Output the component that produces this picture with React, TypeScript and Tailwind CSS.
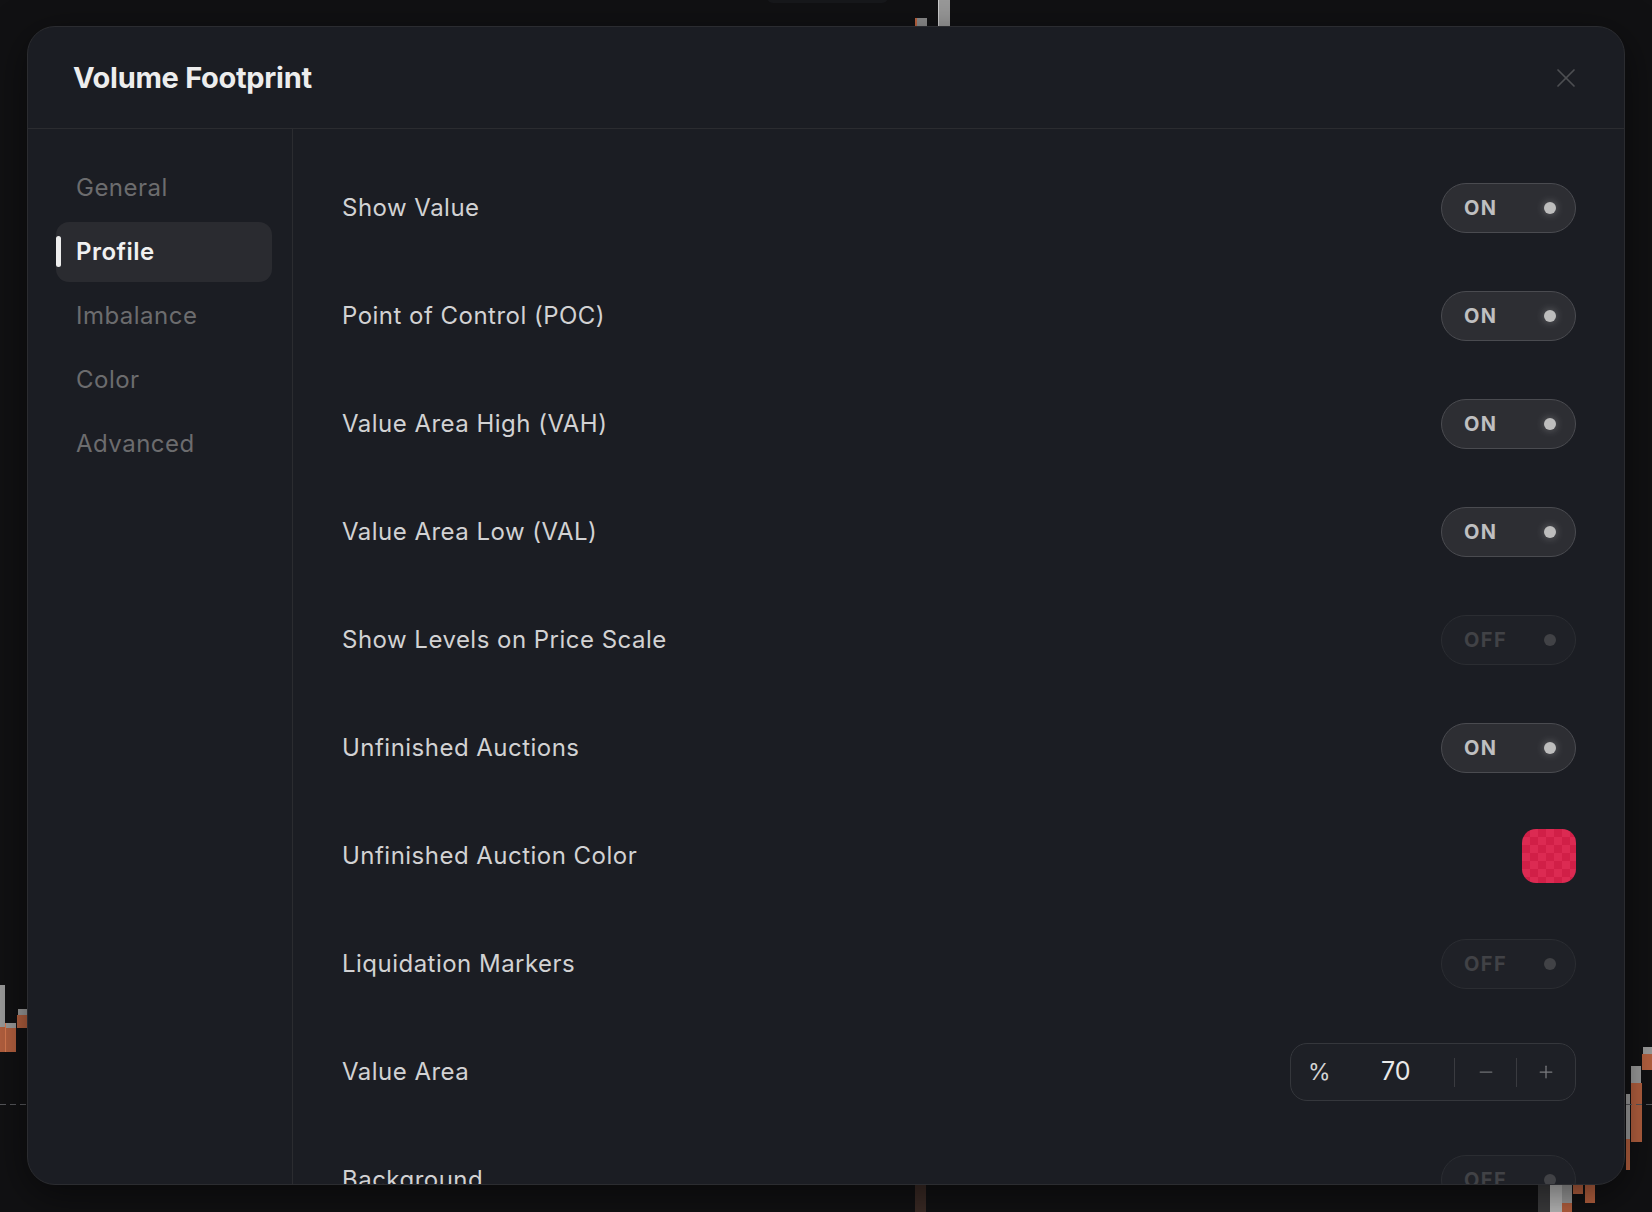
import React from 'react';
import { X, Minus, Plus } from 'lucide-react';

type Row =
  | { label: string; kind: 'toggle'; on: boolean }
  | { label: string; kind: 'color' }
  | { label: string; kind: 'number'; value: number };

const rows: Row[] = [
  { label: 'Show Value', kind: 'toggle', on: true },
  { label: 'Point of Control (POC)', kind: 'toggle', on: true },
  { label: 'Value Area High (VAH)', kind: 'toggle', on: true },
  { label: 'Value Area Low (VAL)', kind: 'toggle', on: true },
  { label: 'Show Levels on Price Scale', kind: 'toggle', on: false },
  { label: 'Unfinished Auctions', kind: 'toggle', on: true },
  { label: 'Unfinished Auction Color', kind: 'color' },
  { label: 'Liquidation Markers', kind: 'toggle', on: false },
  { label: 'Value Area', kind: 'number', value: 70 },
  { label: 'Background', kind: 'toggle', on: false },
];

const tabs = ['General', 'Profile', 'Imbalance', 'Color', 'Advanced'];

const Toggle: React.FC<{ on: boolean }> = ({ on }) => (
  <div
    className={
      on
        ? 'flex items-center justify-between w-[135px] h-[50px] rounded-full border border-[#4a4b50] bg-[#2d2e33] pl-[22px] pr-[19px]'
        : 'flex items-center justify-between w-[135px] h-[50px] rounded-full border border-[#2b2d32] bg-[#1f2127] pl-[22px] pr-[19px]'
    }
  >
    <span
      className={
        on
          ? 'text-[20px] font-bold tracking-[0.07em] text-[#bfbfc0]'
          : 'text-[20px] font-bold tracking-[0.07em] text-[#414246]'
      }
    >
      {on ? 'ON' : 'OFF'}
    </span>
    <span
      className={
        on
          ? 'w-[12px] h-[12px] rounded-full bg-[#bdbdbd] shadow-[0_0_8px_rgba(255,255,255,0.3)]'
          : 'w-[12px] h-[12px] rounded-full bg-[#414246]'
      }
    />
  </div>
);

const Swatch: React.FC = () => (
  <div className="w-[54px] h-[54px] rounded-[14px] overflow-hidden">
    <svg width="54" height="54" viewBox="0 0 54 54">
      <defs>
        <pattern id="chk" width="16" height="16" patternUnits="userSpaceOnUse">
          <rect width="16" height="16" fill="#dc2a52" />
          <rect width="8" height="8" fill="#d11f47" />
          <rect x="8" y="8" width="8" height="8" fill="#d11f47" />
        </pattern>
      </defs>
      <rect width="54" height="54" fill="url(#chk)" />
    </svg>
  </div>
);

const NumberField: React.FC<{ value: number }> = ({ value }) => (
  <div className="flex items-center w-[286px] h-[58px] rounded-[17px] border border-[#35373c] bg-[#1e2026]">
    <div className="flex items-center w-[163px] pl-[17px]">
      <span className="text-[23px] text-[#d2d2d2] w-[20px]">%</span>
      <span className="ml-[53px] text-[25px] text-[#e9e9e9]">{value}</span>
    </div>
    <div className="w-px h-[29px] bg-[#3a3b40]" />
    <div className="flex items-center justify-center w-[61px] text-[#6f7074]">
      <Minus size={20} strokeWidth={1.5} />
    </div>
    <div className="w-px h-[29px] bg-[#3a3b40]" />
    <div className="flex items-center justify-center flex-1 text-[#7a7b7f]">
      <Plus size={20} strokeWidth={1.5} />
    </div>
  </div>
);

const ChartBackdrop: React.FC = () => (
  <svg className="absolute inset-0" width="1652" height="1212" viewBox="0 0 1652 1212">
    <rect x="767" y="-10" width="121" height="13" rx="6" fill="#17181b" />
    <rect x="915" y="18" width="2" height="8" fill="#c0643f" />
    <rect x="917" y="18" width="10" height="8" fill="#8d8d8d" />
    <rect x="938" y="0" width="12" height="26" fill="#9a9a9a" />
    <rect x="938" y="0" width="1" height="26" fill="#cfcfcf" />

    <rect x="0" y="985" width="5" height="42" fill="#9b9b9b" />
    <rect x="0" y="1027" width="5" height="25" fill="#b4603f" />
    <rect x="6" y="1023" width="10" height="5" fill="#9b9b9b" />
    <rect x="6" y="1028" width="10" height="24" fill="#b4603f" />
    <rect x="5" y="1023" width="1" height="29" fill="#d97a50" />
    <rect x="18" y="1009" width="9" height="6" fill="#9b9b9b" />
    <rect x="17" y="1015" width="10" height="13" fill="#b4603f" />
    <line x1="0" y1="1104.5" x2="27" y2="1104.5" stroke="#55565a" strokeDasharray="6 4" />

    <rect x="1626" y="1094" width="4" height="45" fill="#9b9b9b" />
    <rect x="1626" y="1139" width="4" height="31" fill="#b4603f" />
    <rect x="1631" y="1066" width="10" height="17" fill="#9b9b9b" />
    <rect x="1631" y="1083" width="11" height="59" fill="#b4603f" />
    <rect x="1643" y="1047" width="9" height="7" fill="#9b9b9b" />
    <rect x="1642" y="1054" width="10" height="16" fill="#b4603f" />
    <line x1="1626" y1="1104.5" x2="1652" y2="1104.5" stroke="#55565a" strokeDasharray="6 4" />

    <rect x="915" y="1185" width="11" height="27" fill="#3a2a25" />

    <rect x="1538" y="1185" width="12" height="27" fill="#3b3b3d" />
    <rect x="1550" y="1185" width="12" height="27" fill="#b8b8b8" />
    <rect x="1562" y="1185" width="10" height="18" fill="#9a9a9a" />
    <rect x="1562" y="1203" width="10" height="9" fill="#b4603f" />
    <rect x="1573" y="1185" width="10" height="9" fill="#b4603f" />
    <rect x="1585" y="1185" width="10" height="18" fill="#b4603f" />
  </svg>
);

export default function App() {
  return (
    <div className="relative w-[1652px] h-[1212px] overflow-hidden bg-[#111113] font-['Inter','Noto_Sans',sans-serif] pt-[26px]">
      <ChartBackdrop />

      {/* Dialog */}
      <div className="relative ml-[27px] w-[1598px] h-[1159px] flex flex-col rounded-[28px] border border-[#2b2c30] bg-[#1b1d23] overflow-hidden shadow-[0_10px_40px_rgba(0,0,0,0.5)]">
        <div className="flex items-center justify-between h-[102px] shrink-0 border-b border-[#2b2c30] pl-[45px] pr-[42px]">
          <h1 className="text-[29px] font-bold tracking-[-0.01em] text-[#ededed]">Volume Footprint</h1>
          <X size={32} strokeWidth={1.3} className="text-[#4d4e52]" />
        </div>

        <div className="flex flex-1 min-h-0">
          {/* Sidebar */}
          <div className="w-[265px] shrink-0 border-r border-[#2b2c30] pt-[29px] pl-[28px] pr-[20px]">
            <div className="flex flex-col gap-[4px]">
              {tabs.map((t) => {
                const active = t === 'Profile';
                return (
                  <div
                    key={t}
                    className={
                      active
                        ? 'relative flex items-center h-[60px] rounded-[13px] bg-[#2a2b30] pl-[20px] text-[24px] font-semibold tracking-[0.02em] text-[#f1f1f1]'
                        : 'relative flex items-center h-[60px] rounded-[13px] pl-[20px] text-[24px] tracking-[0.02em] text-[#6c6c6e]'
                    }
                  >
                    {active && (
                      <span className="absolute left-0 top-[14px] w-[5px] h-[31px] rounded-full bg-[#ededed]" />
                    )}
                    {t}
                  </div>
                );
              })}
            </div>
          </div>

          {/* Settings list */}
          <div className="flex-1 min-w-0 overflow-hidden pt-[25px] pl-[49px] pr-[48px]">
            {rows.map((r) => (
              <div key={r.label} className="flex items-center justify-between h-[108px]">
                <span className="text-[24px] tracking-[0.02em] text-[#d2d2d3]">{r.label}</span>
                {r.kind === 'toggle' && <Toggle on={r.on} />}
                {r.kind === 'color' && <Swatch />}
                {r.kind === 'number' && <NumberField value={r.value} />}
              </div>
            ))}
          </div>
        </div>
      </div>
    </div>
  );
}
